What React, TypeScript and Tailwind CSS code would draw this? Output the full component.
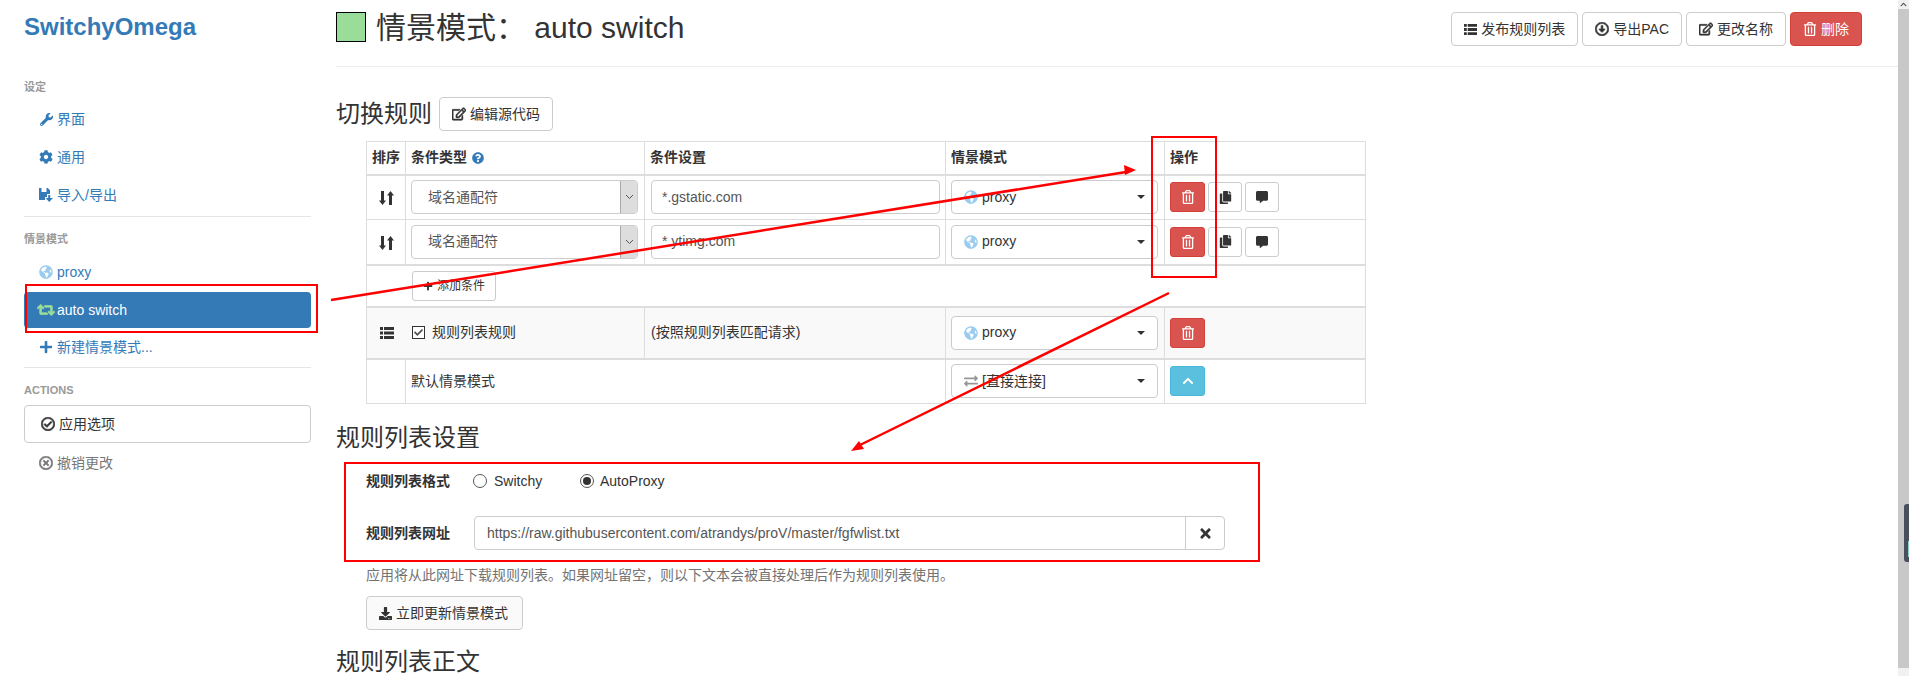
import React from "react";
import {
  FaWrench, FaCog, FaGlobeAmericas, FaRetweet, FaPlus, FaRegCheckCircle, FaRegTimesCircle,
  FaRegArrowAltCircleDown, FaRegEdit, FaRegTrashAlt, FaQuestionCircle, FaCopy,
  FaCommentAlt, FaChevronUp, FaTimes, FaExchangeAlt, FaDownload, FaCheck,
} from "react-icons/fa";

function Sort() {
  return (
    <svg width="15" height="16" viewBox="0 0 15 16" fill="#333">
      <path d="M2 1h3v9.6h2L3.5 15 0 10.6h2z" />
      <path d="M10 15h3V5.4h2L11.5 1 8 5.4h2z" />
    </svg>
  );
}

function ListIcon({ size = 14 }: { size?: number }) {
  return (
    <svg width={size} height={size} viewBox="0 0 14 14" fill="#333">
      <path d="M0 1h3v3H0zM4 1h10v3H4zM0 5.5h3v3H0zM4 5.5h10v3H4zM0 10h3v3H0zM4 10h10v3H4z" />
    </svg>
  );
}

function FloppyOpen() {
  return (
    <svg width="14" height="14" viewBox="0 0 14 14" fill="#337ab7">
      <path d="M0 0h2.5v4h5V0h1.2L11 2.2V6H8v3H6v3H0z" />
      <path d="M9.2 7h2v3H14l-3.8 4-3.6-4h2.6z" />
    </svg>
  );
}

function NavHeader({ children, className = "" }: { children: React.ReactNode; className?: string }) {
  return <div className={`h-5 flex items-center text-[11px] font-bold text-[#999] ${className}`}>{children}</div>;
}

function NavItem({ icon, children, className = "text-[#337ab7]" }: { icon: React.ReactNode; children: React.ReactNode; className?: string }) {
  return (
    <div className={`h-[38px] pl-[15px] flex items-center gap-[4px] text-[14px] ${className}`}>
      <span className="w-[14px] flex justify-center">{icon}</span>
      <span>{children}</span>
    </div>
  );
}

function TopBtn({ icon, children, danger }: { icon: React.ReactNode; children: React.ReactNode; danger?: boolean }) {
  return (
    <div
      className={`h-[34px] px-[12px] flex items-center gap-[4px] rounded-[4px] border text-[14px] ${
        danger ? "bg-[#d9534f] border-[#d43f3a] text-white" : "bg-white border-[#ccc] text-[#333]"
      }`}
    >
      {icon}
      <span>{children}</span>
    </div>
  );
}

function TypeSelect() {
  return (
    <div className="h-[34px] flex rounded-[4px] border border-[#ccc] bg-white text-[14px] text-[#555] overflow-hidden">
      <span className="flex-1 pl-[16px] flex items-center">域名通配符</span>
      <span className="w-[17px] bg-[#ddd] border-l border-[#aaa] flex items-center justify-center">
        <svg width="9" height="6" viewBox="0 0 9 6" fill="none" stroke="#555" strokeWidth="1">
          <path d="M1 1l3.5 3.5L8 1" />
        </svg>
      </span>
    </div>
  );
}

function TextInput({ value }: { value: string }) {
  return (
    <div className="h-[34px] pl-[10px] flex items-center rounded-[4px] border border-[#ccc] bg-white text-[14px] text-[#555]">
      {value}
    </div>
  );
}

function ProfileSelect({ label, direct }: { label: string; direct?: boolean }) {
  return (
    <div className="h-[34px] pl-[12px] pr-[12px] flex items-center rounded-[4px] border border-[#ccc] bg-white text-[14px] text-[#333]">
      <span className="w-[14px] mr-[4px] flex justify-center">
        {direct ? <FaExchangeAlt size={14} color="#979797" /> : <FaGlobeAmericas size={14} color="#99ccee" />}
      </span>
      <span className="flex-1">{label}</span>
      <span className="w-0 h-0 border-x-4 border-x-transparent border-t-4 border-t-[#333]" />
    </div>
  );
}

function SmallBtn({ children, color = "white", wide }: { children: React.ReactNode; color?: "white" | "red" | "blue"; wide?: boolean }) {
  const styles = {
    white: "bg-white border-[#ccc] text-[#333]",
    red: "bg-[#d9534f] border-[#d43f3a] text-white",
    blue: "bg-[#5bc0de] border-[#46b8da] text-white",
  }[color];
  return <div className={`${wide ? "w-[35px]" : "w-[34px]"} h-[30px] flex items-center justify-center rounded-[3px] border ${styles}`}>{children}</div>;
}

function RuleRow({ value }: { value: string }) {
  return (
    <tr>
      <td className="border border-[#ddd] text-center h-[45px] p-0">
        <span className="inline-flex align-middle"><Sort /></span>
      </td>
      <td className="border border-[#ddd] pl-[5px] pr-[6px] py-0"><TypeSelect /></td>
      <td className="border border-[#ddd] pl-[6px] pr-[5px] py-0"><TextInput value={value} /></td>
      <td className="border border-[#ddd] pl-[5px] pr-[6px] py-0"><ProfileSelect label="proxy" /></td>
      <td className="border border-[#ddd] pl-[5px] pr-0 py-0">
        <div className="flex gap-[3px]">
          <SmallBtn wide color="red"><FaRegTrashAlt size={14} /></SmallBtn>
          <SmallBtn><FaCopy size={13} /></SmallBtn>
          <SmallBtn><FaCommentAlt size={12} /></SmallBtn>
        </div>
      </td>
    </tr>
  );
}

function Sidebar() {
  return (
    <aside className="w-[336px] shrink-0 pl-[24px] pr-[25px]">
      <div className="h-[53px] pt-px flex items-center text-[24px] font-bold text-[#337ab7]">SwitchyOmega</div>
      <NavHeader className="mt-[24px]">设定</NavHeader>
      <div className="mt-[3px]">
        <NavItem icon={<FaWrench size={13} />}>界面</NavItem>
        <NavItem icon={<FaCog size={14} />}>通用</NavItem>
        <NavItem icon={<FloppyOpen />}>导入/导出</NavItem>
      </div>
      <div className="mt-[2px] h-px bg-[#e5e5e5]" />
      <NavHeader className="mt-[12px]">情景模式</NavHeader>
      <div className="mt-[4px]">
        <NavItem icon={<FaGlobeAmericas size={14} color="#99ccee" />}>proxy</NavItem>
        <div className="mt-px h-[36px] pl-[13px] flex items-center gap-[2px] rounded-[4px] bg-[#337ab7] text-white text-[14px]">
          <FaRetweet size={18} color="#99dd99" stroke="#99dd99" strokeWidth={24} />
          <span>auto switch</span>
        </div>
        <NavItem icon={<FaPlus size={14} />}>新建情景模式...</NavItem>
      </div>
      <div className="mt-px h-px bg-[#e5e5e5]" />
      <NavHeader className="mt-[12px]">ACTIONS</NavHeader>
      <div className="mt-[5px] h-[38px] pl-[16px] flex items-center gap-[4px] rounded-[4px] border border-[#ccc] text-[14px] text-[#333]">
        <FaRegCheckCircle size={14} strokeWidth={24} />
        <span>应用选项</span>
      </div>
      <div className="mt-[1px]">
        <NavItem icon={<FaRegTimesCircle size={14} strokeWidth={24} />} className="text-[#777]">撤销更改</NavItem>
      </div>
    </aside>
  );
}

function Main() {
  return (
    <main className="flex-1 min-w-0 overflow-hidden text-[#333]">
      <header className="h-[67px] border-b border-[#eee] flex items-start justify-between pr-[36px]">
        <div className="flex items-center h-[54px]">
          <span className="w-[30px] h-[30px] bg-[#99dd99] border border-black" />
          <span className="ml-[10px] pt-[2px] text-[30px] leading-none whitespace-pre">情景模式： auto switch</span>
        </div>
        <div className="flex gap-[4px] mt-[12px]">
          <TopBtn icon={<ListIcon size={13} />}>发布规则列表</TopBtn>
          <TopBtn icon={<FaRegArrowAltCircleDown size={14} strokeWidth={24} />}>导出PAC</TopBtn>
          <TopBtn icon={<FaRegEdit size={14} strokeWidth={24} />}>更改名称</TopBtn>
          <TopBtn danger icon={<FaRegTrashAlt size={14} />}>删除</TopBtn>
        </div>
      </header>

      <div className="mt-[30px] flex items-center gap-[7px]">
        <h3 className="text-[24px] leading-[34px]">切换规则</h3>
        <div className="h-[34px] px-[12px] flex items-center gap-[4px] rounded-[4px] border border-[#ccc] text-[14px]">
          <FaRegEdit size={14} strokeWidth={24} />
          <span>编辑源代码</span>
        </div>
      </div>

      <table className="ml-[30px] mt-[10px] w-[999px] table-fixed border-collapse text-[14px]">
        <colgroup>
          <col className="w-[39px]" />
          <col className="w-[239px]" />
          <col className="w-[301px]" />
          <col className="w-[219px]" />
          <col className="w-[201px]" />
        </colgroup>
        <thead>
          <tr className="font-bold">
            <td className="border border-b-2 border-[#ddd] h-[33px] pl-[5px] pr-0 py-0 whitespace-nowrap">排序</td>
            <td className="border border-b-2 border-[#ddd] pl-[5px] pr-0 py-0">
              <span className="inline-flex items-center gap-[5px]">条件类型 <FaQuestionCircle size={12} color="#337ab7" /></span>
            </td>
            <td className="border border-b-2 border-[#ddd] pl-[5px] pr-0 py-0">条件设置</td>
            <td className="border border-b-2 border-[#ddd] pl-[5px] pr-0 py-0">情景模式</td>
            <td className="border border-b-2 border-[#ddd] pl-[5px] pr-0 py-0">操作</td>
          </tr>
        </thead>
        <tbody>
          <RuleRow value="*.gstatic.com" />
          <RuleRow value="*.ytimg.com" />
          <tr>
            <td colSpan={5} className="border border-y-2 border-[#ddd] h-[42px] pl-[45px] py-0">
              <div className="w-[84px] h-[30px] pl-[10px] flex items-center gap-[4px] rounded-[3px] border border-[#ccc] text-[12px]">
                <FaPlus size={10} />
                <span>添加条件</span>
              </div>
            </td>
          </tr>
          <tr className="bg-[#f9f9f9]">
            <td colSpan={2} className="border border-y-2 border-[#ddd] h-[52px] p-0">
              <div className="flex items-center">
                <span className="w-[39px] flex justify-center"><ListIcon /></span>
                <span className="ml-[6px] w-[13px] h-[13px] border border-[#333] bg-white flex items-center justify-center">
                  <FaCheck size={9} color="#555" />
                </span>
                <span className="ml-[7px]">规则列表规则</span>
              </div>
            </td>
            <td className="border border-y-2 border-[#ddd] px-[6px] py-0">(按照规则列表匹配请求)</td>
            <td className="border border-y-2 border-[#ddd] pl-[5px] pr-[6px] py-0"><ProfileSelect label="proxy" /></td>
            <td className="border border-y-2 border-[#ddd] pl-[5px] pr-0 py-0"><SmallBtn wide color="red"><FaRegTrashAlt size={14} /></SmallBtn></td>
          </tr>
          <tr>
            <td className="border border-[#ddd] h-[45px] p-0" />
            <td colSpan={2} className="border border-[#ddd] pl-[5px] pr-0 py-0">默认情景模式</td>
            <td className="border border-[#ddd] pl-[5px] pr-[6px] py-0"><ProfileSelect label="[直接连接]" direct /></td>
            <td className="border border-[#ddd] pl-[5px] pr-0 py-0"><SmallBtn wide color="blue"><FaChevronUp size={12} /></SmallBtn></td>
          </tr>
        </tbody>
      </table>

      <h3 className="mt-[17px] text-[24px] leading-[34px]">规则列表设置</h3>

      <div className="ml-[30px] mt-[9px] h-[34px] flex items-center text-[14px]">
        <span className="w-[107px] font-bold">规则列表格式</span>
        <span className="w-[14px] h-[14px] rounded-full border border-[#555]" />
        <span className="ml-[7px] w-[86px] text-[#333]">Switchy</span>
        <span className="w-[14px] h-[14px] rounded-full border border-[#555] flex items-center justify-center">
          <span className="w-[8px] h-[8px] rounded-full bg-[#333]" />
        </span>
        <span className="ml-[6px]">AutoProxy</span>
      </div>

      <div className="ml-[30px] mt-[18px] flex items-center text-[14px]">
        <span className="w-[108px] font-bold">规则列表网址</span>
        <div className="w-[751px] h-[34px] flex rounded-[4px] border border-[#ccc] text-[#555]">
          <span className="w-[711px] pl-[12px] flex items-center border-r border-[#ccc]">
            https://raw.githubusercontent.com/atrandys/proV/master/fgfwlist.txt
          </span>
          <span className="flex-1 flex items-center justify-center text-[#333]"><FaTimes size={15} /></span>
        </div>
      </div>

      <p className="ml-[30px] mt-[15px] h-5 leading-5 text-[14px] text-[#737373]">
        应用将从此网址下载规则列表。如果网址留空，则以下文本会被直接处理后作为规则列表使用。
      </p>

      <div className="ml-[30px] mt-[11px] w-[157px] h-[34px] pl-[12px] flex items-center gap-[4px] rounded-[4px] border border-[#ccc] bg-[#fafafa] text-[14px]">
        <FaDownload size={13} />
        <span className="whitespace-nowrap">立即更新情景模式</span>
      </div>

      <h3 className="mt-[15px] text-[24px] leading-[34px]">规则列表正文</h3>
    </main>
  );
}

function Scrollbar() {
  return (
    <div className="w-[11px] shrink-0 flex flex-col bg-[#c8c8c8]">
      <div className="h-[9px] bg-[#f1f1f1] flex items-center justify-center">
        <FaChevronUp size={7} color="#505050" />
      </div>
      <div className="flex-1" />
      <div className="h-[8px] bg-[#f1f1f1]" />
    </div>
  );
}

export default function App() {
  return (
    <div className="relative w-[1909px] h-[676px] overflow-hidden flex bg-white font-['Liberation_Sans','Noto_Sans_CJK_SC',sans-serif]">
      <Sidebar />
      <Main />
      <Scrollbar />
      <div className="absolute left-[1904px] top-[504px] w-[5px] h-[58px] rounded-l-[3px] bg-[#4a4f5c]">
        <div className="ml-[4px] mt-[37px] w-px h-[16px] bg-[#8fd8c8]" />
      </div>
      <svg className="absolute inset-0 pointer-events-none" width="1909" height="676" viewBox="0 0 1909 676" fill="none" stroke="#ff0000" strokeWidth="2">
        <rect x="26" y="285" width="291" height="47" />
        <rect x="1152" y="137" width="64" height="140" />
        <rect x="345" y="463" width="914" height="98" />
        <path d="M331 300L1126 172" strokeWidth="2.5" />
        <path d="M1169 293L860 445" strokeWidth="2.5" />
        <polygon points="1136,170 1124,165 1125,175" fill="#ff0000" stroke="none" />
        <polygon points="851,451 859,441 864,449" fill="#ff0000" stroke="none" />
      </svg>
    </div>
  );
}
